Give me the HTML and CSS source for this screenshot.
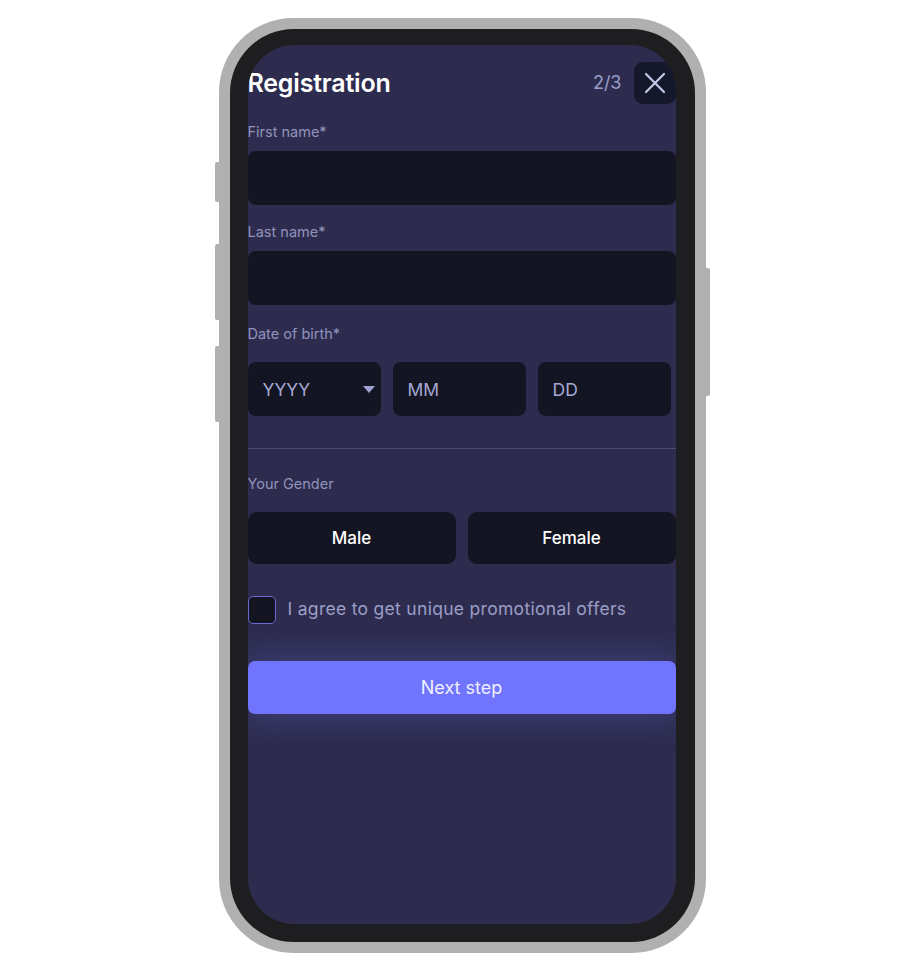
FILE: index.html
```html
<!DOCTYPE html>
<html lang="en">
<head>
    <meta charset="UTF-8">
    <meta name="viewport" content="width=device-width, initial-scale=1.0">
    <title>Registration</title>
    <link rel="stylesheet" href="styles.css">
</head>
<body>
    <div class="phone">
        <span class="side-btn side-mute"></span>
        <span class="side-btn side-vol-up"></span>
        <span class="side-btn side-vol-down"></span>
        <span class="side-btn side-power"></span>
        <div class="bezel">
            <div class="screen">
                <div class="header">
                    <h1 class="title">Registration</h1>
                    <div class="header-right">
                        <span class="step">2/3</span>
                        <button class="close-btn" type="button" aria-label="Close">
                            <svg width="22" height="22" viewBox="0 0 22 22">
                                <path d="M2 2 L20 20 M20 2 L2 20" stroke="#c5c7e8" stroke-width="2.2" stroke-linecap="round" fill="none"/>
                            </svg>
                        </button>
                    </div>
                </div>

                <form class="reg-form">
                    <label class="field-label first" for="firstname">First name*</label>
                    <input class="field-input" type="text" id="firstname">

                    <label class="field-label" for="lastname">Last name*</label>
                    <input class="field-input" type="text" id="lastname">

                    <label class="field-label dob" for="year">Date of birth*</label>
                    <div class="date-row">
                        <div class="date-box date-select" id="year">
                            <span>YYYY</span>
                            <span class="caret"></span>
                        </div>
                        <div class="date-box"><span>MM</span></div>
                        <div class="date-box"><span>DD</span></div>
                    </div>

                    <div class="divider"></div>

                    <div class="field-label gender">Your Gender</div>
                    <div class="gender-row">
                        <button class="gender-btn" type="button">Male</button>
                        <button class="gender-btn" type="button">Female</button>
                    </div>

                    <label class="agree">
                        <span class="checkbox"></span>
                        <span class="agree-text">I agree to get unique promotional offers</span>
                    </label>

                    <button class="next-btn" type="button">Next step</button>
                </form>
            </div>
        </div>
    </div>
</body>
</html>
```

FILE: styles.css
```css
body {
    margin: 0;
    padding: 18px 0 0;
    background-color: #ffffff;
    font-family: Inter, "Open Sans", sans-serif;
    display: flex;
    justify-content: center;
}

.phone {
    position: relative;
    width: 465px;
    height: 913px;
    padding: 11px;
    background-color: #b0b0b0;
    border-radius: 74px;
}

.side-btn {
    position: absolute;
    width: 5px;
    background-color: #b0b0b0;
}

.side-mute {
    left: -4px;
    top: 144px;
    height: 40px;
    border-radius: 2px 0 0 2px;
}

.side-vol-up {
    left: -4px;
    top: 226px;
    height: 76px;
    border-radius: 2px 0 0 2px;
}

.side-vol-down {
    left: -4px;
    top: 328px;
    height: 76px;
    border-radius: 2px 0 0 2px;
}

.side-power {
    right: -4px;
    top: 250px;
    height: 128px;
    border-radius: 0 2px 2px 0;
}

.bezel {
    height: 100%;
    box-sizing: border-box;
    padding: 16px 19px 18px 18px;
    background-color: #1e1e20;
    border-radius: 64px;
}

.screen {
    height: 100%;
    background-color: #2d2c4e;
    border-radius: 46px;
    overflow: hidden;
    padding-top: 17px;
    box-sizing: border-box;
}

.header {
    display: flex;
    justify-content: space-between;
    align-items: center;
    height: 42px;
}

.title {
    margin: 0;
    color: #ffffff;
    font-size: 25px;
    font-weight: 600;
    letter-spacing: -0.2px;
}

.header-right {
    display: flex;
    align-items: center;
    gap: 12px;
}

.step {
    color: #9c9ecb;
    font-size: 18px;
    margin-top: -2px;
}

.close-btn {
    width: 42px;
    height: 42px;
    border: none;
    border-radius: 9px;
    background-color: #15172a;
    display: flex;
    align-items: center;
    justify-content: center;
    padding: 0;
}

.reg-form {
    display: flex;
    flex-direction: column;
}

.field-label {
    display: block;
    color: #9193bd;
    font-size: 14.5px;
    line-height: 20px;
    margin: 17px 0 9px;
}

.field-label.first {
    margin-top: 18px;
}

.field-label.dob {
    margin-top: 19px;
}

.field-label.gender {
    margin: 25px 0 18px;
}

.field-input {
    height: 54px;
    border: none;
    border-radius: 8px;
    background-color: #141522;
    box-sizing: border-box;
}

.date-row {
    display: flex;
    gap: 12px;
    margin-top: 9px;
}

.date-box {
    width: 133px;
    height: 54px;
    box-sizing: border-box;
    padding: 0 15px;
    border-radius: 8px;
    background-color: #141522;
    color: #a6a8d4;
    font-size: 17.5px;
    display: flex;
    align-items: center;
    justify-content: space-between;
}

.caret {
    width: 0;
    height: 0;
    margin-right: -9px;
    border-left: 6.5px solid transparent;
    border-right: 6.5px solid transparent;
    border-top: 7px solid #9fa1d2;
}

.divider {
    height: 1px;
    background-color: #4a4b72;
    margin-top: 32px;
}

.gender-row {
    display: flex;
    gap: 12px;
}

.gender-btn {
    flex: 1;
    height: 52px;
    border: none;
    border-radius: 9px;
    background-color: #141522;
    color: #ffffff;
    font-family: inherit;
    font-size: 17px;
    font-weight: 500;
}

.agree {
    display: flex;
    align-items: center;
    gap: 12px;
    margin-top: 32px;
}

.checkbox {
    width: 28px;
    height: 28px;
    box-sizing: border-box;
    border: 1px solid #6a6cd4;
    border-radius: 5px;
    background-color: #141522;
}

.agree-text {
    color: #9c9ec8;
    font-size: 17.5px;
    line-height: 24px;
    letter-spacing: 0.3px;
    margin-top: -3px;
}

.next-btn {
    margin-top: 37px;
    height: 53px;
    border: none;
    border-radius: 7px;
    background-color: #7175fd;
    color: #eef0ff;
    font-family: inherit;
    font-size: 18px;
    box-shadow: 0 0 32px 6px rgba(112, 116, 251, 0.24);
}
```
